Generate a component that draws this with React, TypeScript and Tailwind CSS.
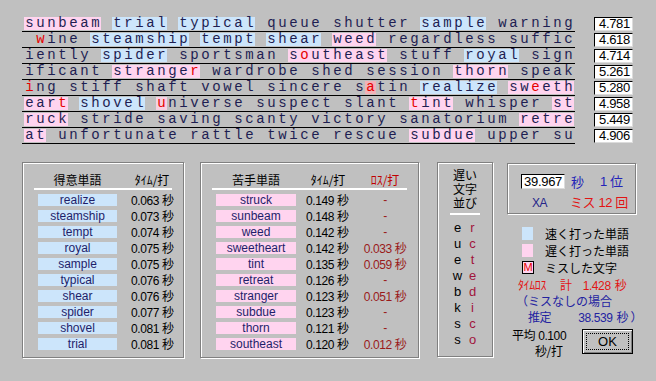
import React from "react";

const lines = [
  "sunbeam trial typical queue shutter sample warning",
  " wine steamship tempt shear weed regardless suffic",
  "iently spider sportsman southeast stuff royal sign",
  "ificant stranger wardrobe shed session thorn speak",
  "ing stiff shaft vowel sincere satin realize sweeth",
  "eart shovel universe suspect slant tint whisper st",
  "ruck stride saving scanty victory sanatorium retre",
  "at unfortunate rattle twice rescue subdue upper su",
];

const scores = ["4.781", "4.618", "4.714", "5.261", "5.280", "4.958", "5.449", "4.906"];

const fast = ["realize", "steamship", "tempt", "royal", "sample", "typical", "shear", "spider", "shovel", "trial"];
const slow = ["struck", "sunbeam", "weed", "sweetheart", "tint", "retreat", "stranger", "subdue", "thorn", "southeast"];

// row:col of mistyped letters, value = extra background
const misses: Record<string, string> = {
  "1:1": "",
  "2:25": "",
  "3:15": "",
  "4:0": "",
  "4:31": "bg-[#f2b2b8]",
  "4:46": "",
  "5:3": "",
  "5:12": "bg-[#f8d0e2]",
  "5:35": "",
};

const good = [
  ["realize", "0.063"],
  ["steamship", "0.073"],
  ["tempt", "0.074"],
  ["royal", "0.075"],
  ["sample", "0.075"],
  ["typical", "0.076"],
  ["shear", "0.076"],
  ["spider", "0.077"],
  ["shovel", "0.081"],
  ["trial", "0.081"],
];

const bad = [
  ["struck", "0.149", "-"],
  ["sunbeam", "0.148", "-"],
  ["weed", "0.142", "-"],
  ["sweetheart", "0.142", "0.033"],
  ["tint", "0.135", "0.059"],
  ["retreat", "0.126", "-"],
  ["stranger", "0.123", "0.051"],
  ["subdue", "0.123", "-"],
  ["thorn", "0.121", "-"],
  ["southeast", "0.120", "0.012"],
];

const slowPairs = [
  ["e", "r"],
  ["u", "c"],
  ["e", "t"],
  ["w", "e"],
  ["b", "d"],
  ["k", "i"],
  ["s", "c"],
  ["s", "o"],
];

// figure out which word each character belongs to
function charKinds() {
  const full = lines.join("");
  const kinds: string[] = new Array(full.length).fill("");
  let i = 0;
  while (i < full.length) {
    if (full[i] === " ") {
      i++;
      continue;
    }
    let j = i;
    while (j < full.length && full[j] !== " ") j++;
    const w = full.slice(i, j);
    const k = fast.includes(w) ? "fast" : slow.includes(w) ? "slow" : "";
    for (let n = i; n < j; n++) kinds[n] = k;
    i = j;
  }
  return kinds;
}

const etched = "border border-[#808080] shadow-[inset_1px_1px_0_#fff,1px_1px_0_#fff]";
const jp = "font-['Noto_Sans_CJK_JP','Liberation_Sans',sans-serif]";
const num = "font-['Liberation_Sans','Noto_Sans_CJK_JP',sans-serif] tracking-[-0.4px]";

function TypedText() {
  const kinds = charKinds();
  return (
    <div className="flex flex-col w-[553px] font-['Liberation_Mono',monospace] text-[14px]">
      {lines.map((line, r) => (
        <div key={r} className="h-[16px] border-b border-black pl-[2px] pt-[1px] flex">
          {line.split("").map((ch, c) => {
            const kind = kinds[r * 50 + c];
            const miss = misses[`${r}:${c}`];
            let bg = kind === "fast" ? "bg-[#cce5fb]" : kind === "slow" ? "bg-[#ffd4ef]" : "";
            if (miss) bg = miss;
            const color = miss !== undefined ? "text-[#e60000]" : "text-[#1e1e52]";
            return (
              <span key={c} className={`inline-block w-[11px] h-[13px] leading-[13px] text-center ${bg} ${color}`}>
                {ch === " " ? "\u00a0" : ch}
              </span>
            );
          })}
        </div>
      ))}
    </div>
  );
}

function Scores() {
  return (
    <div className="flex flex-col ml-[19px]">
      {scores.map((s) => (
        <div key={s} className="h-[16px] pt-[1px]">
          <div className="w-[39px] h-[14px] bg-white border border-black border-r-[#dcdcdc] border-b-[#dcdcdc] text-right pr-[2px] text-[13px] leading-[12px] tracking-[-0.3px] text-black font-['Liberation_Sans',sans-serif]">
            {s}
          </div>
        </div>
      ))}
    </div>
  );
}

function GoodPanel() {
  return (
    <div className={`w-[162px] h-[196px] pt-[8px] ${etched}`}>
      <div className="h-[17px] flex pl-[15px] items-center text-[12px] leading-[15px] text-black">
        <div className={`w-[79px] text-center ${jp}`}>得意単語</div>
        <div className={`ml-[14px] w-[42px] text-center ${jp}`}>ﾀｲﾑ/打</div>
      </div>
      <div className="mx-[11px] border-t-2 border-white" />
      <div className="pt-[2px]">
        {good.map(([w, t]) => (
          <div key={w} className="h-[16px] flex items-center pl-[15px]">
            <div className="w-[79px] h-[12px] bg-[#cce5fb] text-center text-[12px] leading-[12px] text-[#1e1e6a] font-['Liberation_Sans',sans-serif]">
              {w}
            </div>
            <div className={`ml-[14px] text-[12px] leading-[12px] text-black ${num}`}>
              {t} <span className={jp}>秒</span>
            </div>
          </div>
        ))}
      </div>
    </div>
  );
}

function BadPanel() {
  return (
    <div className={`ml-[16px] w-[219px] h-[196px] pt-[8px] ${etched}`}>
      <div className="h-[17px] flex pl-[15px] items-center text-[12px] leading-[15px] text-black">
        <div className={`w-[80px] text-center ${jp}`}>苦手単語</div>
        <div className={`ml-[10px] w-[44px] text-center ${jp}`}>ﾀｲﾑ/打</div>
        <div className={`ml-[11px] w-[48px] text-center text-[#c00000] ${jp}`}>ﾛｽ/打</div>
      </div>
      <div className="mx-[11px] border-t-2 border-white" />
      <div className="pt-[2px]">
        {bad.map(([w, t, l]) => (
          <div key={w} className="h-[16px] flex items-center pl-[15px]">
            <div className="w-[80px] h-[12px] bg-[#ffd4ef] text-center text-[12px] leading-[12px] text-[#1e1e6a] font-['Liberation_Sans',sans-serif]">
              {w}
            </div>
            <div className={`ml-[10px] w-[44px] text-[12px] leading-[12px] text-black ${num}`}>
              {t} <span className={jp}>秒</span>
            </div>
            <div className={`ml-[11px] w-[48px] text-center text-[12px] leading-[12px] text-[#9a1a1a] ${num}`}>
              {l === "-" ? (
                "-"
              ) : (
                <>
                  {l} <span className={jp}>秒</span>
                </>
              )}
            </div>
          </div>
        ))}
      </div>
    </div>
  );
}

function SlowKeys() {
  return (
    <div className={`ml-[18px] w-[56px] h-[195px] pt-[5px] flex flex-col items-center ${etched}`}>
      <div className={`text-[12px] leading-[14px] text-black text-center ${jp}`}>
        <div className="h-[14px]">遅い</div>
        <div className="h-[14px]">文字</div>
        <div className="h-[14px]">並び</div>
      </div>
      <div className="mt-[3px] w-[30px] border-t-2 border-white" />
      <div className="mt-[5px] flex flex-col">
        {slowPairs.map(([a, b], i) => (
          <div key={i} className="h-[16px] leading-[16px] flex text-[13px] font-['Liberation_Sans',sans-serif]">
            <span className="w-[15px] text-center text-black">{a}</span>
            <span className="w-[15px] text-center text-[#a0143c]">{b}</span>
          </div>
        ))}
      </div>
    </div>
  );
}

function ResultPanel() {
  return (
    <div className="ml-[14px] w-[129px] mt-[1px] flex flex-col">
      <div className={`h-[51px] pt-[9px] ${etched}`}>
        <div className="h-[16px] flex items-center">
          <div className="ml-[13px] w-[44px] h-[15px] bg-white border border-black border-r-[#dcdcdc] border-b-[#dcdcdc] text-right pr-[2px] text-[13px] leading-[13px] tracking-[-0.3px] text-black font-['Liberation_Sans',sans-serif]">
            39.967
          </div>
          <span className={`ml-[6px] text-[13px] leading-[15px] text-[#2323b8] ${jp}`}>秒</span>
          <span className={`ml-[16px] text-[13px] leading-[15px] text-[#2323b8] ${num}`}>
            1 <span className={jp}>位</span>
          </span>
        </div>
        <div className="h-[16px] mt-[5px] leading-[16px] text-[13px] whitespace-nowrap">
          <span className={`inline-block ml-[24px] w-[30px] text-[12px] text-[#26268a] ${num}`}>XA</span>
          <span className={`ml-[8px] text-[#e21414] ${num}`}>
            <span className={jp}>ミス</span> 12 <span className={jp}>回</span>
          </span>
        </div>
      </div>
      <div className={`mt-[11px] flex flex-col text-[12px] text-black ${jp}`}>
        <div className="h-[17px] flex items-center">
          <div className="ml-[15px] w-[11px] h-[13px] bg-[#cce5fb]" />
          <span className="ml-[12px] leading-[14px]">速く打った単語</span>
        </div>
        <div className="h-[17px] flex items-center">
          <div className="ml-[15px] w-[11px] h-[13px] bg-[#ffd4ef]" />
          <span className="ml-[12px] leading-[14px]">遅く打った単語</span>
        </div>
        <div className="h-[17px] flex items-center">
          <div className="ml-[15px] w-[12px] h-[13px] border border-black bg-[#ffd4ef] text-[#e60000] text-[11px] leading-[11px] text-center font-['Liberation_Sans',sans-serif]">
            M
          </div>
          <span className="ml-[11px] leading-[14px]">ミスした文字</span>
        </div>
      </div>
      <div className={`mt-[1px] h-[16px] leading-[16px] pl-[11px] text-[12px] whitespace-nowrap text-[#e21414] ${num}`}>
        <span className={jp}>ﾀｲﾑﾛｽ</span>
        <span className={`ml-[14px] ${jp}`}>計</span>
        <span className="ml-[11px]">1.428</span>
        <span className={`ml-[4px] ${jp}`}>秒</span>
      </div>
      <div className={`h-[16px] leading-[16px] pl-[9px] text-[12px] whitespace-nowrap text-[#2323a0] ${jp}`}>（ミスなしの場合</div>
      <div className={`h-[16px] leading-[16px] text-[12px] whitespace-nowrap text-[#2323a0] ${num}`}>
        <span className={`ml-[21px] ${jp}`}>推定</span>
        <span className="ml-[27px]">38.539</span>
        <span className={`ml-[4px] ${jp}`}>秒 ）</span>
      </div>
      <div className="mt-[2px] flex">
        <div className={`ml-[5px] flex flex-col text-[12px] leading-[16px] whitespace-nowrap text-black ${num}`}>
          <div className="h-[16px]">
            <span className={jp}>平均</span> 0.100
          </div>
          <div className={`h-[16px] pl-[23px] ${jp}`}>秒/打</div>
        </div>
        <div className="ml-auto mr-[3px] mt-[2px] w-[51px] h-[25px] border border-black bg-[#c0c0c0] shadow-[inset_1px_1px_0_#fff,inset_-1px_-1px_0_#808080] p-[3px]">
          <div className="w-full h-full border border-dotted border-black flex items-center justify-center text-[13px] text-black font-['Liberation_Sans',sans-serif]">
            OK
          </div>
        </div>
      </div>
    </div>
  );
}

export default function App() {
  return (
    <div className="w-[656px] h-[381px] bg-[#c0c0c0] overflow-hidden font-['Liberation_Sans','Noto_Sans_CJK_JP',sans-serif]">
      <div className="flex pt-[16px] pl-[22px]">
        <TypedText />
        <Scores />
      </div>
      <div className="flex mt-[18px] pl-[22px] items-start">
        <GoodPanel />
        <BadPanel />
        <SlowKeys />
        <ResultPanel />
      </div>
    </div>
  );
}
